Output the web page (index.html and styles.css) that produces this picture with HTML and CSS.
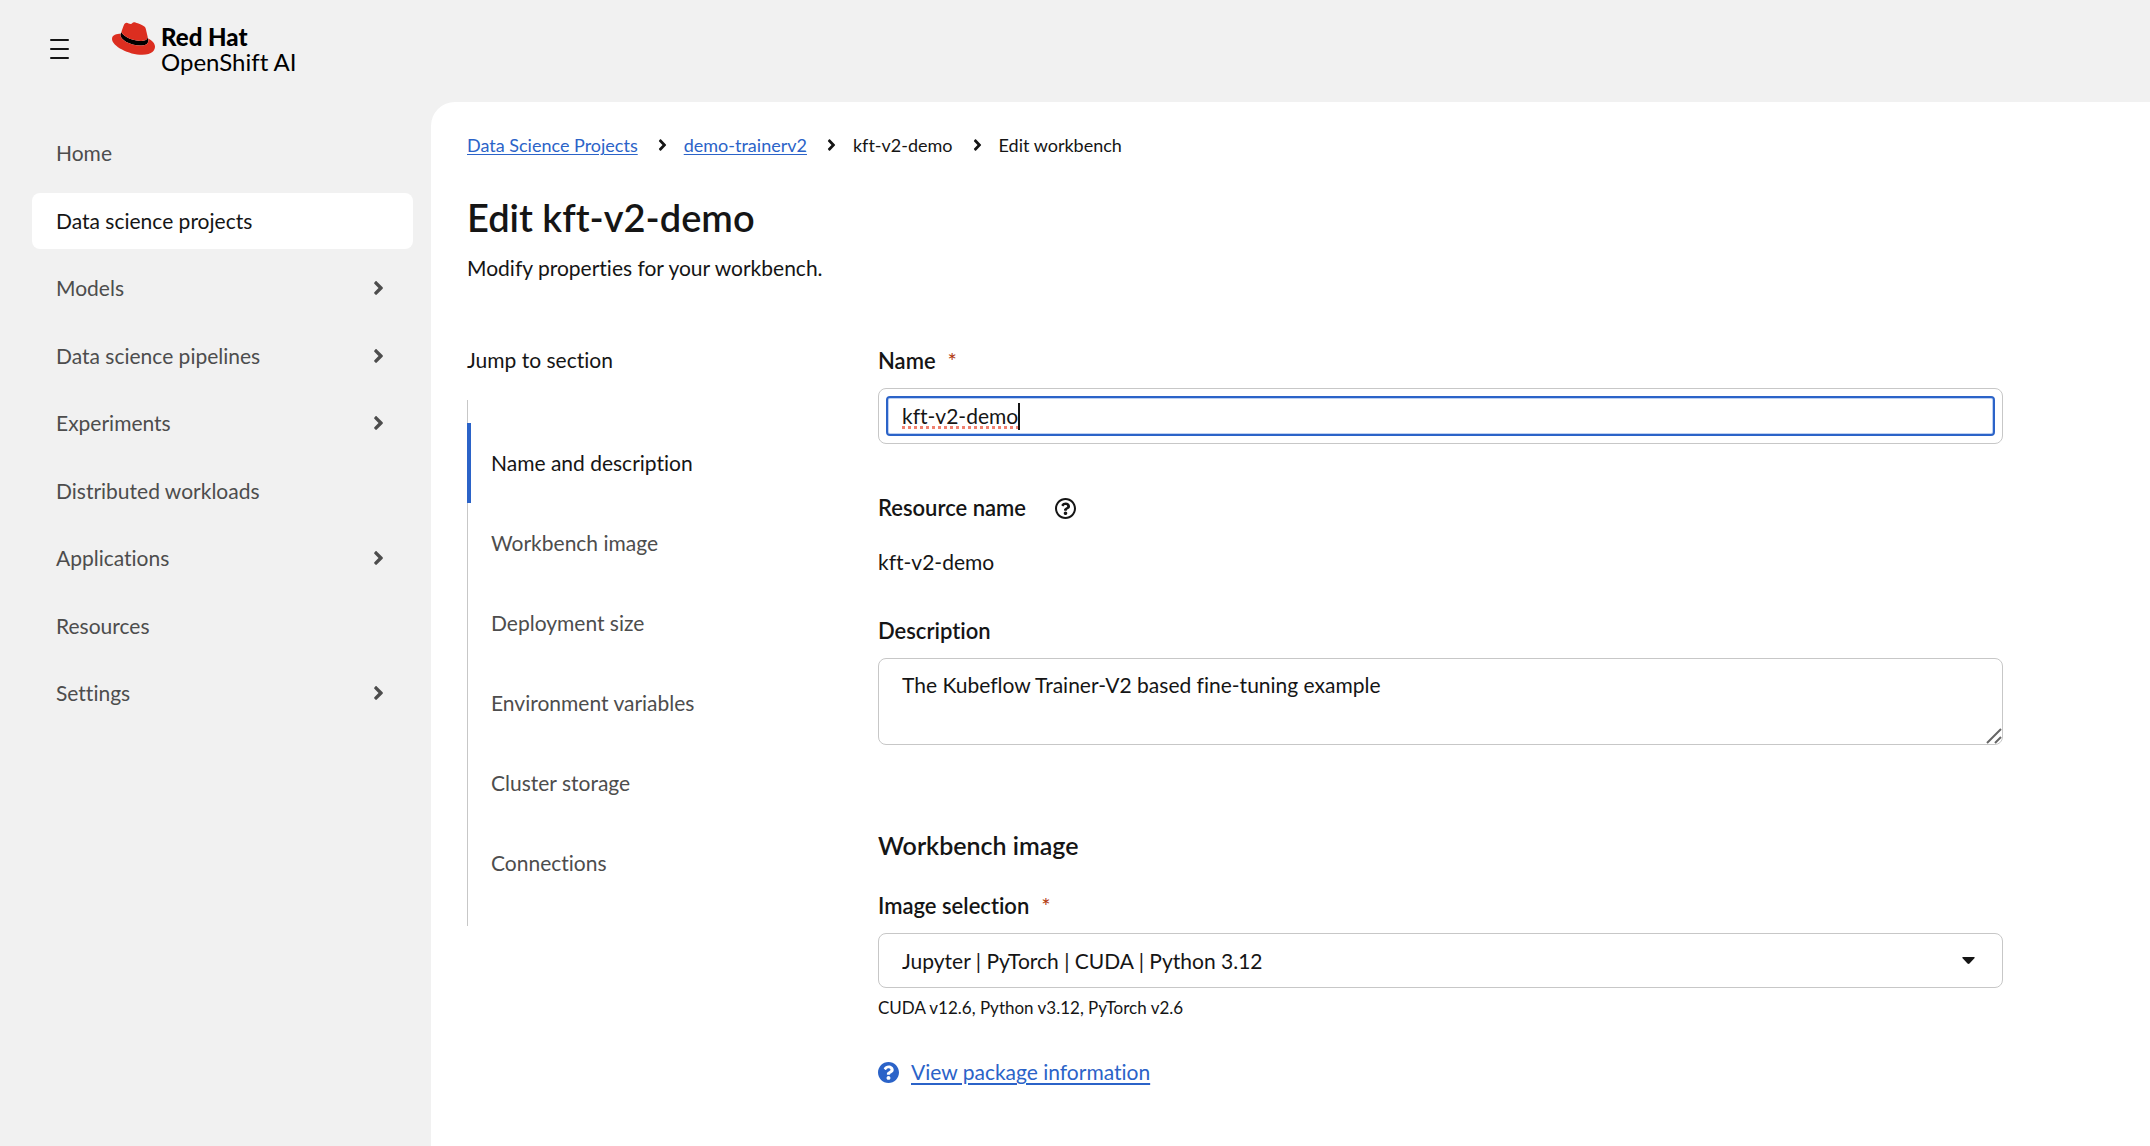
FILE: index.html
```html
<!DOCTYPE html>
<html lang="en">
<head>
<meta charset="utf-8">
<meta name="viewport" content="width=device-width, initial-scale=1">
<title>Edit workbench | Red Hat OpenShift AI</title>
<link rel="stylesheet" href="styles.css">
</head>
<body>
<svg class="sprite" aria-hidden="true">
  <symbol id="angle-right" viewBox="0 0 256 512"><path fill="currentColor" d="M224.3 273l-136 136c-9.4 9.4-24.6 9.4-33.9 0l-22.6-22.6c-9.4-9.4-9.4-24.6 0-33.9l96.4-96.4-96.4-96.4c-9.4-9.4-9.4-24.6 0-33.9L54.3 103c9.4-9.4 24.6-9.4 33.9 0l136 136c9.5 9.4 9.5 24.6.1 34z"/></symbol>
</svg>

<header class="masthead">
  <button class="menu-toggle" type="button" aria-label="Global navigation"><span></span><span></span><span></span></button>
  <a class="brand" href="#">
    <svg class="brand-hat" viewBox="0 2.9 24 18.2" aria-hidden="true">
      <path fill="#000" d="M20.11 11.951c.218 1.032.218 1.14.218 1.277 0 1.765-1.984 2.745-4.593 2.745-5.895.004-11.06-3.451-11.06-5.734 0-.32.066-.636.19-.925l.46-1.13a.81.81 0 0 0-.028.245c0 1.162 4.577 4.974 10.71 4.974 1.577 0 3.86-.326 3.86-2.202a1.765 1.765 0 0 0-.04-.431z"/>
      <path fill="#dc2e20" d="M16.009 13.386c1.577 0 3.86-.326 3.86-2.202a1.765 1.765 0 0 0-.04-.431l-.94-4.08c-.216-.898-.406-1.305-1.982-2.093-1.223-.625-3.888-1.658-4.676-1.658-.733 0-.947.946-1.822.946-.842 0-1.467-.706-2.255-.706-.757 0-1.25.515-1.63 1.576 0 0-1.06 2.99-1.197 3.424a.81.81 0 0 0-.028.245c0 1.162 4.577 4.974 10.71 4.974m4.101-1.435c.218 1.032.218 1.14.218 1.277 0 1.765-1.984 2.745-4.593 2.745-5.895.004-11.06-3.451-11.06-5.734a2.326 2.326 0 0 1 .19-.925C2.746 9.415 0 9.794 0 12.217c0 3.969 9.405 8.861 16.851 8.861 5.71 0 7.149-2.582 7.149-4.62 0-1.605-1.387-3.425-3.887-4.512"/>
    </svg>
    <span class="brand-text"><span class="brand-name">Red Hat</span><span>OpenShift AI</span></span>
  </a>
</header>

<div class="page">
  <nav class="sidebar" aria-label="Main">
    <ul class="nav-list">
      <li><a class="nav-item" href="#">Home</a></li>
      <li><a class="nav-item is-current" href="#" aria-current="page">Data science projects</a></li>
      <li><button class="nav-item" type="button">Models<svg class="nav-angle"><use href="#angle-right"/></svg></button></li>
      <li><button class="nav-item" type="button">Data science pipelines<svg class="nav-angle"><use href="#angle-right"/></svg></button></li>
      <li><button class="nav-item" type="button">Experiments<svg class="nav-angle"><use href="#angle-right"/></svg></button></li>
      <li><a class="nav-item" href="#">Distributed workloads</a></li>
      <li><button class="nav-item" type="button">Applications<svg class="nav-angle"><use href="#angle-right"/></svg></button></li>
      <li><a class="nav-item" href="#">Resources</a></li>
      <li><button class="nav-item" type="button">Settings<svg class="nav-angle"><use href="#angle-right"/></svg></button></li>
    </ul>
  </nav>

  <main class="content">
    <nav aria-label="Breadcrumb">
      <ol class="breadcrumb">
        <li><a href="#">Data Science Projects</a></li>
        <li><svg><use href="#angle-right"/></svg><a href="#">demo-trainerv2</a></li>
        <li><svg><use href="#angle-right"/></svg>kft-v2-demo</li>
        <li><svg><use href="#angle-right"/></svg>Edit workbench</li>
      </ol>
    </nav>
    <h1>Edit kft-v2-demo</h1>
    <p class="subtitle">Modify properties for your workbench.</p>

    <div class="columns">
      <nav class="jump" aria-labelledby="jump-title">
        <div id="jump-title">Jump to section</div>
        <ul class="jump-list">
          <li><a class="is-current" href="#name-section">Name and description</a></li>
          <li><a href="#image-section">Workbench image</a></li>
          <li><a href="#">Deployment size</a></li>
          <li><a href="#">Environment variables</a></li>
          <li><a href="#">Cluster storage</a></li>
          <li><a href="#">Connections</a></li>
        </ul>
      </nav>

      <form class="form">
        <section class="section" id="name-section">
          <div class="field">
            <label class="label" for="name">Name<span class="required" aria-hidden="true">*</span></label>
            <div class="control focus-frame">
              <div class="focus-ring">
                <input class="name-input" id="name" type="text" value="kft-v2-demo" required>
                <span class="caret"></span>
              </div>
            </div>
          </div>
          <div class="field resource">
            <div class="label">Resource name
              <button class="help" type="button" aria-label="Resource name help"><svg viewBox="8 8 496 496"><path fill="currentColor" d="M256 8C119.043 8 8 119.083 8 256c0 136.997 111.043 248 248 248s248-111.003 248-248C504 119.083 392.957 8 256 8zm0 448c-110.532 0-200-89.431-200-200 0-110.495 89.472-200 200-200 110.491 0 200 89.471 200 200 0 110.53-89.431 200-200 200zm107.244-255.2c0 67.052-72.421 68.084-72.421 92.863V300c0 6.627-5.373 12-12 12h-45.647c-6.627 0-12-5.373-12-12v-8.659c0-35.745 27.1-50.034 47.579-61.516 17.561-9.845 28.324-16.541 28.324-29.579 0-17.246-21.999-28.693-39.784-28.693-23.189 0-33.894 10.977-48.942 29.969-4.057 5.12-11.46 6.071-16.666 2.124l-27.824-21.098c-5.107-3.872-6.251-11.066-2.644-16.363C184.846 131.491 214.94 112 261.794 112c49.071 0 101.45 38.304 101.45 88.8zM298 368c0 23.159-18.841 42-42 42s-42-18.841-42-42 18.841-42 42-42 42 18.841 42 42z"/></svg></button>
            </div>
            <div>kft-v2-demo</div>
          </div>
          <div class="field">
            <label class="label" for="description">Description</label>
            <div class="overlay-host">
              <textarea class="control" id="description">The Kubeflow Trainer-V2 based fine-tuning example</textarea>
              <svg class="grip" viewBox="0 0 16 16" aria-hidden="true"><path d="M1 15L15 1M9 15l6-6" fill="none" stroke="#666" stroke-width="2"/></svg>
            </div>
          </div>
        </section>

        <section id="image-section">
          <h2>Workbench image</h2>
          <div class="field">
            <label class="label" for="image">Image selection<span class="required" aria-hidden="true">*</span></label>
            <div class="overlay-host">
              <select class="control" id="image"><option>Jupyter | PyTorch | CUDA | Python 3.12</option></select>
              <svg class="select-arrow" viewBox="0 0 13 7" aria-hidden="true"><path d="M1 0h11q1 0 .6 1L7.500 6.500q-1 .9-2 0L.4 1Q0 0 1 0z" fill="currentColor"/></svg>
            </div>
          </div>
          <p class="helper">CUDA v12.6, Python v3.12, PyTorch v2.6</p>
          <a class="package-link" href="#">
            <svg viewBox="8 8 496 496" aria-hidden="true"><path fill="currentColor" d="M504 256c0 136.997-111.043 248-248 248S8 392.997 8 256C8 119.083 119.043 8 256 8s248 111.083 248 248zM262.655 90c-54.497 0-89.255 22.957-116.549 63.758-3.536 5.286-2.353 12.415 2.715 16.258l34.699 26.31c5.205 3.947 12.621 3.008 16.665-2.122 17.864-22.658 30.113-35.797 57.303-35.797 20.429 0 45.698 13.148 45.698 32.958 0 14.976-12.363 22.667-32.534 33.976C247.128 238.528 216 254.941 216 296v4c0 6.627 5.373 12 12 12h56c6.627 0 12-5.373 12-12v-1.333c0-28.462 83.186-29.647 83.186-106.667 0-58.002-60.165-102-116.531-102zM256 338c-25.365 0-46 20.635-46 46 0 25.364 20.635 46 46 46s46-20.636 46-46c0-25.364-20.635-46-46-46z"/></svg>
            <span>View package information</span>
          </a>
        </section>
      </form>
    </div>
  </main>
</div>
</body>
</html>
```
FILE: styles.css
```css
:root {
  --text: #151515;
  --subtle: #4d4d4d;
  --link: #2b63c8;
  --border: #c7c7c7;
  --surface: #f1f1f1;
}

* { box-sizing: border-box; }

body {
  margin: 0;
  min-height: 100vh;
  display: flex;
  flex-direction: column;
  background: var(--surface);
  color: var(--text);
  font-family: Lato, "Open Sans", sans-serif;
  font-size: 21px;
  line-height: 32px;
  font-variant-ligatures: none;
}

ul, ol { list-style: none; margin: 0; padding: 0; }
h1, h2, p { margin: 0; }
button, input, textarea, select { font: inherit; font-variant-ligatures: none; color: inherit; margin: 0; }
button { border: 0; padding: 0; background: none; cursor: pointer; }
a { color: var(--link); }
svg { display: block; flex: none; }
.sprite { position: absolute; width: 0; height: 0; }

/* Masthead */
.masthead {
  display: flex;
  align-items: flex-start;
  gap: 43px;
  min-height: 102px;
  padding: 22px 50px;
}
.menu-toggle {
  display: flex;
  flex-direction: column;
  gap: 7px;
  width: 19px;
  padding-top: 17px;
}
.menu-toggle span { height: 2px; border-radius: 1px; background: var(--text); }
.brand { display: flex; gap: 6px; color: #000; text-decoration: none; }
.brand-hat { width: 43px; height: 33px; }
.brand-text {
  display: flex;
  flex-direction: column;
  padding-top: 2px;
  font-size: 24px;
  line-height: 25px;
}
.brand-name { font-weight: 900; }

/* Sidebar */
.page { flex: 1; display: grid; grid-template-columns: 431px minmax(0, 1fr); }
.sidebar { padding: 23px 18px 24px 32px; }
.nav-list {
  display: flex;
  flex-direction: column;
  justify-content: space-between;
  min-height: 596px;
}
.nav-item {
  display: flex;
  align-items: center;
  justify-content: space-between;
  width: 100%;
  padding: 12px 29px 12px 24px;
  border-radius: 8px;
  color: var(--subtle);
  text-decoration: none;
}
.nav-item.is-current { background: #fff; color: var(--text); }
.nav-angle { width: 11px; height: 22px; }

/* Content */
.content {
  padding: 29px 147px 48px 36px;
  border-top-left-radius: 24px;
  background: #fff;
}
.breadcrumb { display: flex; gap: 20px; font-size: 18px; line-height: 28px; }
.breadcrumb li { display: flex; align-items: center; gap: 17px; }
.breadcrumb svg { width: 9px; height: 18px; }
.breadcrumb a { text-underline-offset: 2px; text-decoration-thickness: 1px; }
h1 { margin-top: 34px; font-size: 38px; line-height: 48px; font-weight: 600; }
.subtitle { margin-top: 11px; }
.columns {
  display: grid;
  grid-template-columns: 411px minmax(0, 1fr);
  align-items: start;
  margin-top: 60px;
}

/* Section links */
.jump-list { margin-top: 24px; padding: 23px 0; border-left: 1px solid var(--border); }
.jump-list a {
  display: block;
  margin-left: -1px;
  padding: 24px 0 24px 20px;
  border-left: 4px solid transparent;
  color: var(--subtle);
  text-decoration: none;
}
.jump-list .is-current { border-color: var(--link); color: var(--text); }

/* Form */
.section { display: grid; gap: 36px; margin-bottom: 82px; }
.field { display: grid; gap: 11px; }
.label { display: flex; align-items: center; padding-top: 1px; font-size: 22px; font-weight: 600; }
.required { margin-left: 12px; color: #b1380b; font-weight: 400; }
.control {
  display: block;
  width: 100%;
  border: 1px solid var(--border);
  border-radius: 8px;
  background: #fff;
}
.focus-frame { padding: 7px; }
.focus-ring {
  display: flex;
  align-items: center;
  height: 40px;
  padding-left: 14px;
  border: 2px solid var(--link);
  border-radius: 4px;
  box-shadow: inset 0 0 0 1px #bdd0f2;
}
.name-input {
  field-sizing: content;
  height: 32px;
  padding: 0;
  border: 0;
  outline: 0;
  background: repeating-linear-gradient(to right, #f0806f 0 3px, transparent 3px 6px) 0 26px / 100% 3px no-repeat;
}
.caret { width: 2px; height: 27px; background: var(--text); }
.resource { gap: 22px; margin-top: 11px; }
.help { margin-left: 29px; }
.help svg { width: 21px; height: 21px; }
.overlay-host { position: relative; }
textarea.control { height: 87px; padding: 10px 23px; resize: none; }
.grip { position: absolute; right: 1px; bottom: 1px; width: 16px; height: 16px; }
h2 { margin-bottom: 26px; font-size: 25px; line-height: 36px; font-weight: 600; }
select.control { height: 55px; padding: 0 60px 0 23px; appearance: none; }
.select-arrow {
  position: absolute;
  right: 28px;
  top: 24px;
  width: 13px;
  height: 7px;
  pointer-events: none;
}
.helper { margin-top: 6px; font-size: 17px; line-height: 28px; }
.package-link {
  display: inline-flex;
  align-items: center;
  gap: 12px;
  margin-top: 34px;
  text-decoration: none;
}
.package-link svg { width: 21px; height: 21px; }
.package-link span {
  text-decoration: underline;
  text-underline-offset: 3px;
  text-decoration-thickness: 2px;
}
```
